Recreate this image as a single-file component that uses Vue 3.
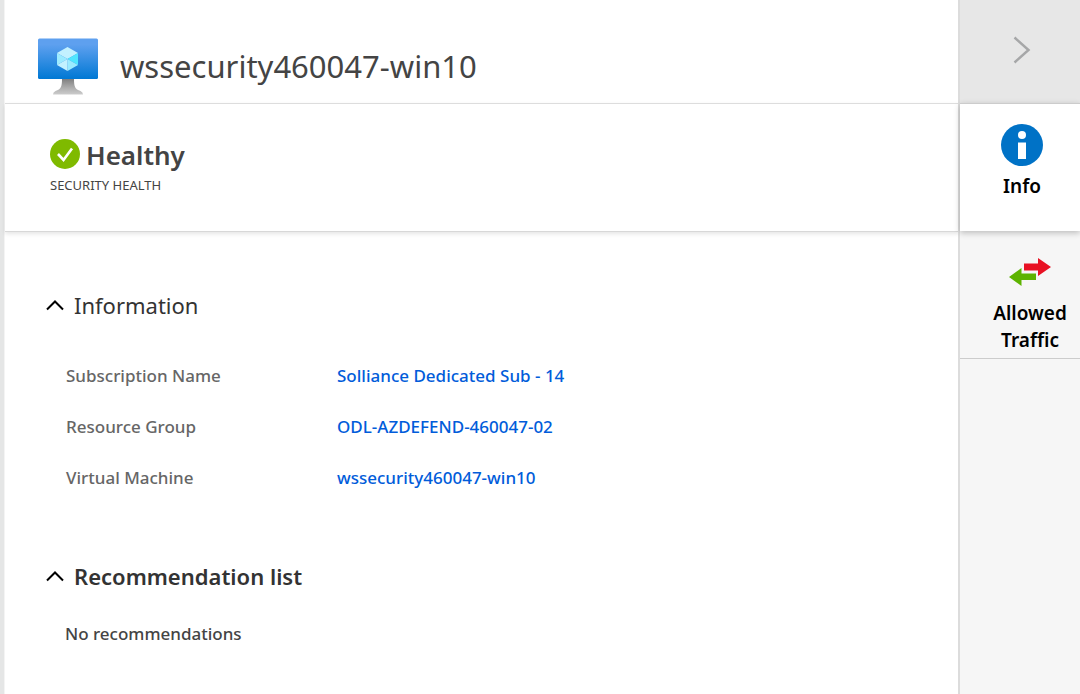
<script setup>
import { ref } from 'vue'

const details = [
  { label: 'Subscription Name', value: 'Solliance Dedicated Sub - 14' },
  { label: 'Resource Group', value: 'ODL-AZDEFEND-460047-02' },
  { label: 'Virtual Machine', value: 'wssecurity460047-win10' }
]
const infoOpen = ref(true)
const listOpen = ref(true)
const tab = ref('info')
</script>

<template>
  <div class="blade">
    <main class="main">
      <header class="title-bar">
        <svg class="vm-icon" viewBox="0 0 60 57" aria-hidden="true">
          <defs>
            <linearGradient id="screen" x1="0" y1="0" x2="0" y2="1">
              <stop offset="0.15" stop-color="#5ea0ef" />
              <stop offset="1" stop-color="#0078d4" />
            </linearGradient>
            <linearGradient id="stand" x1="0" y1="0" x2="0" y2="1">
              <stop offset="0" stop-color="#808080" />
              <stop offset="0.6" stop-color="#b0b0b0" />
              <stop offset="1" stop-color="#cccccc" />
            </linearGradient>
          </defs>
          <path d="M24 41h12c0 8 1 10 6.500 12q2.500 1 2.500 3.500H15q0-2.500 2.500-3.500C23 51 24 49 24 41z" fill="url(#stand)" />
          <rect y="0.500" width="60" height="40.500" rx="1.500" fill="url(#screen)" />
          <path d="M29.500 9l10.500 6-10.500 6L19 15z" fill="#c3f1ff" />
          <path d="M40 15v12l-10.500-6z" fill="#50e6ff" />
          <path d="M19 15v12l10.500-6zM29.500 21L40 27l-10.500 6z" fill="#9cebff" />
          <path d="M29.500 21v12L19 27z" fill="#c3f1ff" />
        </svg>
        <h1>wssecurity460047-win10</h1>
      </header>

      <section class="health">
        <div class="status">
          <svg class="check" viewBox="0 0 30 30" aria-hidden="true">
            <circle cx="15" cy="15" r="15" fill="#7fba00" />
            <path d="M8 15l5.500 6L22 9.500" fill="none" stroke="#fff" stroke-width="2.600" />
          </svg>
          <strong>Healthy</strong>
        </div>
        <p>SECURITY HEALTH</p>
      </section>

      <section class="information">
        <h2>
          <button type="button" :aria-expanded="infoOpen" @click="infoOpen = !infoOpen">
            <svg viewBox="0 0 18 12" aria-hidden="true"><path d="M1 10.500l8-8 8 8" /></svg>
            Information
          </button>
        </h2>
        <dl v-show="infoOpen">
          <div v-for="item in details" :key="item.label" class="detail">
            <dt>{{ item.label }}</dt>
            <dd><a href="#">{{ item.value }}</a></dd>
          </div>
        </dl>
      </section>

      <section class="recommendations">
        <h2>
          <button type="button" :aria-expanded="listOpen" @click="listOpen = !listOpen">
            <svg viewBox="0 0 18 12" aria-hidden="true"><path d="M1 10.500l8-8 8 8" /></svg>
            Recommendation list
          </button>
        </h2>
        <p v-show="listOpen">No recommendations</p>
      </section>
    </main>

    <aside class="side">
      <button type="button" class="collapse" aria-label="Collapse">
        <svg viewBox="0 0 18 28" aria-hidden="true"><path d="M1.500 1.500L15.500 14 1.500 26.500" /></svg>
      </button>
      <button type="button" class="tab" :class="{ active: tab === 'info' }" @click="tab = 'info'">
        <svg class="info-icon" viewBox="0 0 42 42" aria-hidden="true">
          <circle cx="21" cy="21" r="21" fill="#0072c6" />
          <circle cx="21" cy="11" r="4" fill="#fff" />
          <path d="M17 18.500h8V35h-8z" fill="#fff" />
        </svg>
        <span>Info</span>
      </button>
      <button type="button" class="tab traffic" :class="{ active: tab === 'traffic' }" @click="tab = 'traffic'">
        <svg class="arrows" viewBox="0 0 42 28" aria-hidden="true">
          <path d="M15 5.500h14V0l13 9-13 9v-5.500H15z" fill="#e81123" />
          <path d="M27 15.500H12.500V10L0 19l12.500 9v-6H27z" fill="#5db300" />
        </svg>
        <span>Allowed Traffic</span>
      </button>
    </aside>
  </div>
</template>

<style>
body {
  background: #ffffff;
}
</style>

<style scoped>
.blade {
  display: flex;
  min-height: 100vh;
  box-sizing: border-box;
  border-left: 4px solid #e5e6e6;
  font-family: "Noto Sans", "Open Sans", sans-serif;
  color: #333333;
}
h1, h2, p, dl, dd {
  margin: 0;
}
svg {
  display: block;
  flex: none;
}
button {
  border: 0;
  padding: 0;
  background: none;
  font: inherit;
  color: inherit;
  cursor: pointer;
}
.main {
  flex: 1;
  min-width: 0;
  background: #ffffff;
  border-left: 1px solid #f4f4f4;
}
.title-bar {
  display: flex;
  align-items: center;
  gap: 22px;
  padding: 30px 33px 0;
  height: 103px;
  box-sizing: border-box;
}
.vm-icon {
  width: 60px;
  height: 57px;
}
h1 {
  padding-bottom: 2px;
  font-size: 31px;
  line-height: 40px;
  font-weight: 400;
  color: #444444;
}
.health {
  border-top: 1px solid #dddddd;
  border-bottom: 1px solid #d8d8d8;
  box-shadow: 0 2px 4px rgba(0, 0, 0, 0.1);
  padding: 33px 45px 36px;
}
.status {
  display: flex;
  align-items: center;
  gap: 6px;
}
.check {
  width: 30px;
  height: 30px;
  margin-bottom: 4px;
}
.status strong {
  padding-bottom: 2px;
  font-size: 26px;
  line-height: 36px;
  font-weight: 600;
  color: #444444;
}
.health p {
  font-size: 13px;
  line-height: 20px;
  color: #444444;
}
h2 {
  font-weight: 400;
}
h2 button {
  display: flex;
  align-items: center;
  gap: 10px;
  font-size: 22px;
  line-height: 30px;
}
h2 svg {
  width: 18px;
  height: 12px;
}
h2 path {
  fill: none;
  stroke: #000000;
  stroke-width: 2;
}
.information {
  padding: 58px 41px 0;
}
dl {
  padding: 30px 20px 0;
  font-size: 17px;
  line-height: 51px;
  font-weight: 500;
}
.detail {
  display: grid;
  grid-template-columns: 271px 1fr;
}
dt {
  color: #666666;
}
a {
  color: #015cda;
  text-decoration: none;
}
.recommendations {
  padding: 58px 41px 0;
}
.recommendations h2 {
  font-weight: 600;
}
.recommendations p {
  padding: 31px 19px;
  font-size: 17px;
  line-height: 24px;
  font-weight: 500;
  color: #444444;
}
.side {
  width: 122px;
  box-sizing: border-box;
  flex: none;
  display: flex;
  flex-direction: column;
  background: #f6f6f6;
  border-left: 2px solid #dcdcdc;
}
.collapse {
  height: 103px;
  display: flex;
  align-items: center;
  justify-content: center;
  padding: 0 0 4px 4px;
  background: #e7e7e7;
}
.collapse svg {
  width: 18px;
  height: 28px;
}
.collapse path {
  fill: none;
  stroke: #a6a7a8;
  stroke-width: 2.500;
}
.tab {
  display: flex;
  flex-direction: column;
  align-items: center;
  padding: 20px 0 31px 4px;
  border-top: 1px solid #cccccc;
  font-size: 19px;
  line-height: 27px;
  font-weight: 600;
  color: #000000;
}
.tab.active {
  background: #ffffff;
  box-shadow: 0 2px 6px rgba(0, 0, 0, 0.24);
}
.info-icon {
  width: 42px;
  height: 42px;
  margin-bottom: 7px;
}
.traffic {
  padding: 26px 8px 4px 28px;
  border-top-color: transparent;
  border-bottom: 1px solid #cccccc;
}
.arrows {
  width: 42px;
  height: 28px;
  margin-bottom: 14px;
}
</style>
